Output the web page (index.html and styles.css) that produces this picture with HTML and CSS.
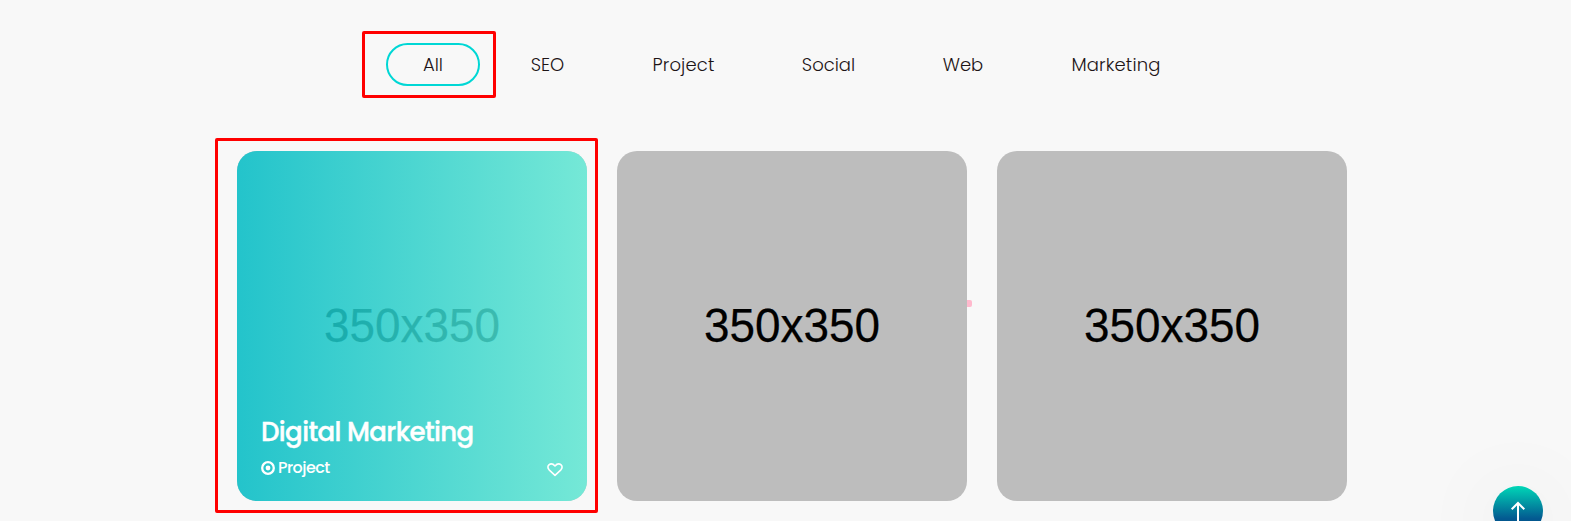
FILE: index.html
```html
<!DOCTYPE html>
<html lang="en">
<head>
<meta charset="utf-8">
<title>Portfolio</title>
<link rel="stylesheet" href="styles.css">
</head>
<body>
<main class="portfolio">
  <nav class="filters">
    <a class="filter filter-all"><span>All</span></a>
    <a class="filter filter-seo"><span>SEO</span></a>
    <a class="filter filter-project"><span>Project</span></a>
    <a class="filter filter-social"><span>Social</span></a>
    <a class="filter filter-web"><span>Web</span></a>
    <a class="filter filter-marketing"><span>Marketing</span></a>
  </nav>
  <section class="cards">
    <article class="card">
      <span class="size">350x350</span>
      <div class="overlay">
        <h3 class="title"><span>Digital Marketing</span></h3>
        <div class="meta">
          <span class="category">
            <svg class="dot" viewBox="0 0 14 14"><circle cx="7" cy="7" r="5.8" fill="none" stroke="#fff" stroke-width="2.3"/><circle cx="7" cy="7" r="2.4" fill="#fff"/></svg>
            <span class="category-name">Project</span>
          </span>
          <svg class="heart" viewBox="0 0 16 14"><path d="M8 12.4 2.1 6.8C.4 5 .7 2.9 1.9 1.9 3.7.4 6.1.8 8 3 9.9.8 12.3.4 14.1 1.900 15.300 2.900 15.600 5 13.900 6.800Z" fill="none" stroke="#fff" stroke-width="1.6" stroke-linejoin="round"/></svg>
        </div>
      </div>
    </article>
    <article class="card"><span class="size">350x350</span></article>
    <article class="card"><span class="size">350x350</span></article>
  </section>
</main>
<i class="shape"></i>
<i class="marker marker-filter"></i>
<i class="marker marker-card"></i>
<a class="to-top"><svg class="arrow" viewBox="0 0 16 22"><path d="M8 21V2M1.7 8.3 8 2 14.3 8.3" fill="none" stroke="#fff" stroke-width="2"/></svg></a>
</body>
</html>
```
FILE: styles.css
```css
* { box-sizing: border-box; }
body {
  margin: 0;
  height: 521px;
  overflow: hidden;
  position: relative;
  background: #f8f8f8;
  font-family: Poppins, Inter, sans-serif;
  color: #1d1416;
}
.portfolio { padding: 43px 0 0 237px; }
.filters { display: flex; gap: 14px; padding-left: 149px; }
.filter {
  height: 43px;
  border: 2px solid transparent;
  border-radius: 22px;
  display: flex;
  align-items: center;
  justify-content: center;
  font-size: 18px;
  font-weight: 300;
  white-space: nowrap;
}
.filter-all { width: 94px; border-color: #00d7d5; }
.filter-seo { width: 107px; }
.filter-project { width: 137px; letter-spacing: 0.15px; }
.filter-social { width: 125px; }
.filter-web { width: 116px; }
.filter-marketing { width: 162px; letter-spacing: 0.15px; }
.cards { display: flex; gap: 30px; margin-top: 65px; }
.card {
  width: 350px;
  height: 350px;
  flex: none;
  position: relative;
  border-radius: 20px;
  overflow: hidden;
  background: #bdbdbd;
  display: flex;
  align-items: center;
  justify-content: center;
}
.size {
  font: 48px/54px "Liberation Sans", Arial, sans-serif;
  color: #000;
  -webkit-text-stroke: 0.25px #000;
  transform: scaleX(0.956);
}
.overlay {
  position: absolute;
  inset: 0;
  padding: 0 24px 22px;
  display: flex;
  flex-direction: column;
  justify-content: flex-end;
  color: #fff;
  background: linear-gradient(90deg, rgba(4, 197, 206, 0.83), rgba(99, 243, 221, 0.8));
}
.title { margin: 0 0 7px; font-size: 26px; font-weight: 500; line-height: 36px; letter-spacing: -0.6px; -webkit-text-stroke: 0.4px #fff; }
.meta { display: flex; align-items: center; justify-content: space-between; height: 22px; }
.category { display: flex; align-items: center; gap: 3px; font-size: 16px; font-weight: 500; line-height: 22px; letter-spacing: -0.55px; }
.dot { width: 14px; height: 14px; }
.heart { width: 16px; height: 14px; margin-top: 4px; }
.shape { position: absolute; left: 967px; top: 300px; width: 5px; height: 7px; background: #ffb9cd; border-radius: 0 2px 2px 0; }
.marker { position: absolute; border: 3px solid #f00; border-radius: 2px; }
.marker-filter { left: 362px; top: 31px; width: 134px; height: 67px; }
.marker-card { left: 215px; top: 138px; width: 383px; height: 375px; }
.to-top {
  position: absolute;
  left: 1493px;
  top: 486px;
  width: 50px;
  height: 50px;
  border-radius: 50%;
  background: linear-gradient(#00d7b7, #035a91 65%, #02437f);
  box-shadow: 0 8px 80px 20px rgba(0, 0, 0, 0.03);
}
.arrow { display: block; width: 16px; height: 22px; margin: 15px 0 0 17px; }
```
